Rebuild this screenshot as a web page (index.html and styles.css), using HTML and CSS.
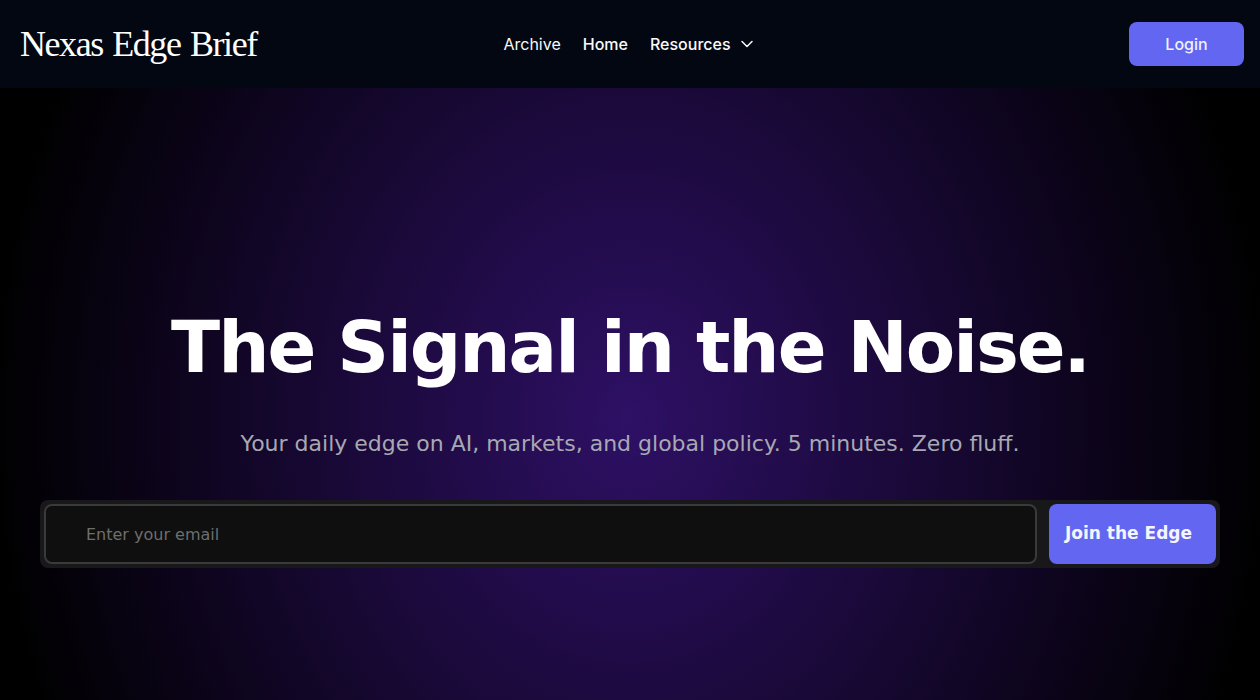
FILE: index.html
```html
<!DOCTYPE html>
<html lang="en">
<head>
  <meta charset="UTF-8">
  <meta name="viewport" content="width=device-width, initial-scale=1.0">
  <title>Nexas Edge Brief</title>
  <link rel="stylesheet" href="styles.css">
</head>
<body>
  <header class="navbar">
    <a class="logo" href="#">Nexas Edge Brief</a>
    <nav class="nav-links">
      <a class="nav-link dim" href="#">Archive</a>
      <a class="nav-link" href="#">Home</a>
      <a class="nav-link" href="#">Resources
        <svg class="chevron" width="16" height="16" viewBox="0 0 16 16" fill="none" stroke="currentColor" stroke-width="1.5" stroke-linecap="round" stroke-linejoin="round"><path d="M3 5.5l5 5 5-5"/></svg>
      </a>
    </nav>
    <button class="login-btn">Login</button>
  </header>

  <main class="hero">
    <h1>The Signal in the Noise.</h1>
    <p class="subtitle">Your daily edge on AI, markets, and global policy. 5 minutes. Zero fluff.</p>
    <form class="signup">
      <input type="email" class="email-input" placeholder="Enter your email">
      <button type="submit" class="join-btn">Join the Edge</button>
    </form>
  </main>
</body>
</html>
```

FILE: styles.css
```css
* {
  box-sizing: border-box;
}

html, body {
  height: 100%;
}

body {
  margin: 0;
  background: #000;
  color: #fff;
  font-family: 'DejaVu Sans', sans-serif;
  overflow: hidden;
}

.navbar {
  height: 88px;
  display: grid;
  grid-template-columns: 1fr auto 1fr;
  align-items: center;
  padding: 0 16px 0 20px;
  background: #030712;
}

.logo {
  font-family: 'Liberation Serif', serif;
  font-size: 36px;
  letter-spacing: -1.45px;
  word-spacing: 2px;
  color: #fff;
  text-decoration: none;
}

.nav-links {
  display: flex;
  align-items: center;
  gap: 22px;
  margin-right: 6px;
}

.nav-link {
  display: flex;
  align-items: center;
  gap: 8px;
  font-family: Inter, sans-serif;
  font-size: 16px;
  font-weight: 500;
  color: #f9fafb;
  text-decoration: none;
}

.nav-link.dim {
  font-weight: 400;
  color: #f9fafb;
}

.login-btn {
  justify-self: end;
  width: 115px;
  height: 44px;
  border: none;
  border-radius: 8px;
  background: #6366f1;
  color: #eef2ff;
  font-family: Inter, sans-serif;
  font-size: 16px;
  font-weight: 500;
}

.hero {
  height: 612px;
  padding: 0 40px 132px;
  display: flex;
  flex-direction: column;
  align-items: center;
  justify-content: flex-end;
  background: radial-gradient(ellipse 640px 760px at 50% 54%, #2e1065 0%, #000 100%);
}

h1 {
  margin: 0 0 41px;
  font-size: 72px;
  font-weight: 700;
  line-height: 1.2;
  letter-spacing: -2px;
  text-align: center;
}

.subtitle {
  margin: 0 0 44px;
  font-size: 22px;
  color: #a8a8b3;
}

.signup {
  width: 100%;
  height: 68px;
  flex-shrink: 0;
  padding: 4px;
  display: flex;
  gap: 12px;
  border-radius: 8px;
  background: #18181b;
}

.email-input {
  flex: 1;
  padding: 0 40px;
  border: 2px solid #3a3a3a;
  border-radius: 8px;
  background: #0f0f0f;
  color: #fff;
  font-family: inherit;
  font-size: 16px;
}

.email-input::placeholder {
  color: #6e6e6e;
}

.join-btn {
  width: 167px;
  padding: 0 0 2px 16px;
  border: none;
  border-radius: 8px;
  background: #6366f1;
  color: #f5f5ff;
  font-family: inherit;
  font-size: 17px;
  font-weight: 700;
  text-align: left;
}
```
